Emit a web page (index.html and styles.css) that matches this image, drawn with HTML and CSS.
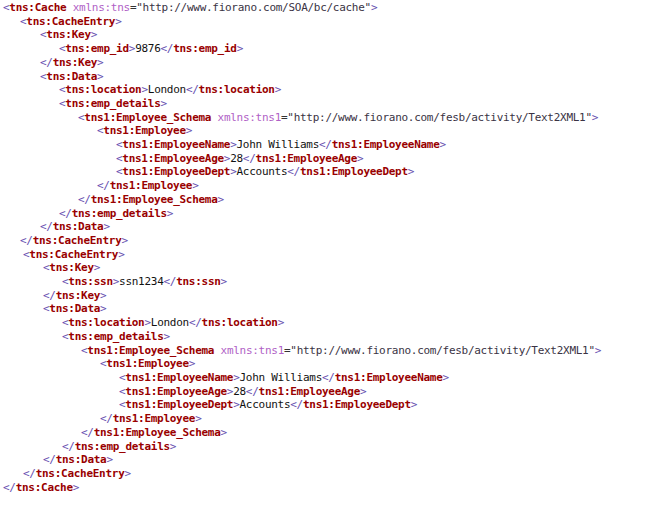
FILE: index.html
```html
<!DOCTYPE html>
<html>
<head>
<meta charset="utf-8">
<link rel="stylesheet" href="styles.css">
</head>
<body>
<div class="xml">
<div class="ln l0"><span class="b">&lt;</span><span class="t">tns:Cache</span> <span class="a">xmlns:tns</span><span class="q">=</span><span class="v">"http://www.fiorano.com/SOA/bc/cache"</span><span class="b">&gt;</span></div>
<div class="ln l1"><span class="b">&lt;</span><span class="t">tns:CacheEntry</span><span class="b">&gt;</span></div>
<div class="ln l2"><span class="b">&lt;</span><span class="t">tns:Key</span><span class="b">&gt;</span></div>
<div class="ln l3"><span class="b">&lt;</span><span class="t">tns:emp_id</span><span class="b">&gt;</span><span class="x">9876</span><span class="b">&lt;/</span><span class="t">tns:emp_id</span><span class="b">&gt;</span></div>
<div class="ln l2"><span class="b">&lt;/</span><span class="t">tns:Key</span><span class="b">&gt;</span></div>
<div class="ln l2"><span class="b">&lt;</span><span class="t">tns:Data</span><span class="b">&gt;</span></div>
<div class="ln l3"><span class="b">&lt;</span><span class="t">tns:location</span><span class="b">&gt;</span><span class="x">London</span><span class="b">&lt;/</span><span class="t">tns:location</span><span class="b">&gt;</span></div>
<div class="ln l3"><span class="b">&lt;</span><span class="t">tns:emp_details</span><span class="b">&gt;</span></div>
<div class="ln l4"><span class="b">&lt;</span><span class="t">tns1:Employee_Schema</span> <span class="a">xmlns:tns1</span><span class="q">=</span><span class="v">"http://www.fiorano.com/fesb/activity/Text2XML1"</span><span class="b">&gt;</span></div>
<div class="ln l5"><span class="b">&lt;</span><span class="t">tns1:Employee</span><span class="b">&gt;</span></div>
<div class="ln l6"><span class="b">&lt;</span><span class="t">tns1:EmployeeName</span><span class="b">&gt;</span><span class="x">John Williams</span><span class="b">&lt;/</span><span class="t">tns1:EmployeeName</span><span class="b">&gt;</span></div>
<div class="ln l6"><span class="b">&lt;</span><span class="t">tns1:EmployeeAge</span><span class="b">&gt;</span><span class="x">28</span><span class="b">&lt;/</span><span class="t">tns1:EmployeeAge</span><span class="b">&gt;</span></div>
<div class="ln l6"><span class="b">&lt;</span><span class="t">tns1:EmployeeDept</span><span class="b">&gt;</span><span class="x">Accounts</span><span class="b">&lt;/</span><span class="t">tns1:EmployeeDept</span><span class="b">&gt;</span></div>
<div class="ln l5"><span class="b">&lt;/</span><span class="t">tns1:Employee</span><span class="b">&gt;</span></div>
<div class="ln l4"><span class="b">&lt;/</span><span class="t">tns1:Employee_Schema</span><span class="b">&gt;</span></div>
<div class="ln l3"><span class="b">&lt;/</span><span class="t">tns:emp_details</span><span class="b">&gt;</span></div>
<div class="ln l2"><span class="b">&lt;/</span><span class="t">tns:Data</span><span class="b">&gt;</span></div>
<div class="ln l1"><span class="b">&lt;/</span><span class="t">tns:CacheEntry</span><span class="b">&gt;</span></div>
<div class="entry2">
<div class="ln l1"><span class="b">&lt;</span><span class="t">tns:CacheEntry</span><span class="b">&gt;</span></div>
<div class="ln l2"><span class="b">&lt;</span><span class="t">tns:Key</span><span class="b">&gt;</span></div>
<div class="ln l3"><span class="b">&lt;</span><span class="t">tns:ssn</span><span class="b">&gt;</span><span class="x">ssn1234</span><span class="b">&lt;/</span><span class="t">tns:ssn</span><span class="b">&gt;</span></div>
<div class="ln l2"><span class="b">&lt;/</span><span class="t">tns:Key</span><span class="b">&gt;</span></div>
<div class="ln l2"><span class="b">&lt;</span><span class="t">tns:Data</span><span class="b">&gt;</span></div>
<div class="ln l3"><span class="b">&lt;</span><span class="t">tns:location</span><span class="b">&gt;</span><span class="x">London</span><span class="b">&lt;/</span><span class="t">tns:location</span><span class="b">&gt;</span></div>
<div class="ln l3"><span class="b">&lt;</span><span class="t">tns:emp_details</span><span class="b">&gt;</span></div>
<div class="ln l4"><span class="b">&lt;</span><span class="t">tns1:Employee_Schema</span> <span class="a">xmlns:tns1</span><span class="q">=</span><span class="v">"http://www.fiorano.com/fesb/activity/Text2XML1"</span><span class="b">&gt;</span></div>
<div class="ln l5"><span class="b">&lt;</span><span class="t">tns1:Employee</span><span class="b">&gt;</span></div>
<div class="ln l6"><span class="b">&lt;</span><span class="t">tns1:EmployeeName</span><span class="b">&gt;</span><span class="x">John Williams</span><span class="b">&lt;/</span><span class="t">tns1:EmployeeName</span><span class="b">&gt;</span></div>
<div class="ln l6"><span class="b">&lt;</span><span class="t">tns1:EmployeeAge</span><span class="b">&gt;</span><span class="x">28</span><span class="b">&lt;/</span><span class="t">tns1:EmployeeAge</span><span class="b">&gt;</span></div>
<div class="ln l6"><span class="b">&lt;</span><span class="t">tns1:EmployeeDept</span><span class="b">&gt;</span><span class="x">Accounts</span><span class="b">&lt;/</span><span class="t">tns1:EmployeeDept</span><span class="b">&gt;</span></div>
<div class="ln l5"><span class="b">&lt;/</span><span class="t">tns1:Employee</span><span class="b">&gt;</span></div>
<div class="ln l4"><span class="b">&lt;/</span><span class="t">tns1:Employee_Schema</span><span class="b">&gt;</span></div>
<div class="ln l3"><span class="b">&lt;/</span><span class="t">tns:emp_details</span><span class="b">&gt;</span></div>
<div class="ln l2"><span class="b">&lt;/</span><span class="t">tns:Data</span><span class="b">&gt;</span></div>
<div class="ln l1"><span class="b">&lt;/</span><span class="t">tns:CacheEntry</span><span class="b">&gt;</span></div>
</div>
<div class="ln l0"><span class="b">&lt;/</span><span class="t">tns:Cache</span><span class="b">&gt;</span></div>
</div>
</body>
</html>
```

FILE: styles.css
```css
html, body {
  margin: 0;
  padding: 0;
  background: #ffffff;
}
.xml {
  padding: 1px 0 0 3px;
  font-family: "DejaVu Sans Mono", "Liberation Mono", monospace;
  font-size: 11px;
  letter-spacing: -0.28px;
  line-height: 13.71px;
  color: #222222;
}
.entry2 {
  padding-left: 3px;
}
.ln {
  height: 13.71px;
  white-space: pre;
}
.l0 { padding-left: 0; }
.l1 { padding-left: 17px; }
.l2 { padding-left: 37px; }
.l3 { padding-left: 56px; }
.l4 { padding-left: 75px; }
.l5 { padding-left: 94px; }
.l6 { padding-left: 113px; }
.b { color: #6650b0; }
.t { color: #990000; font-weight: bold; }
.a { color: #b061c6; }
.q { color: #333333; }
.v { color: #3a3344; }
.x { color: #111111; }
```
